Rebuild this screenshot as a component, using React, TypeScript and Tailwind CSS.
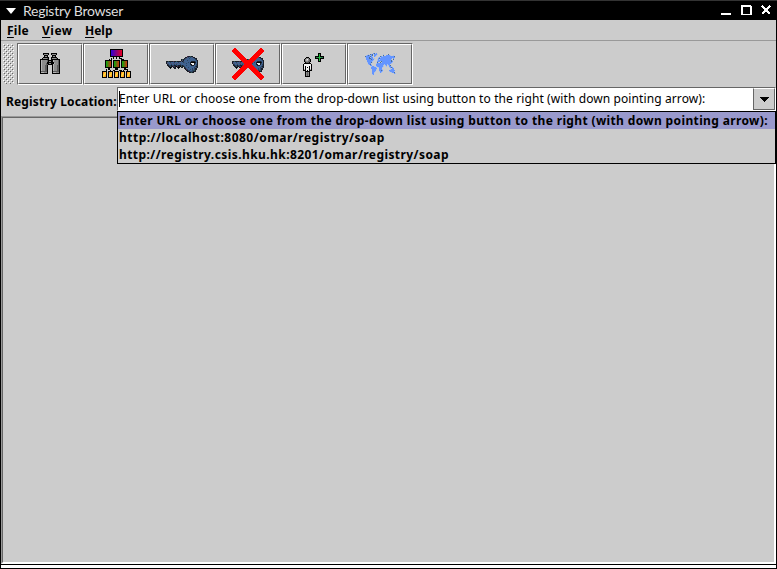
import React from 'react';

const palette: Record<string, string> = {
  k: '#000000', g: '#8c8c8c', d: '#5c5c5c', l: '#b4b4b4', w: '#f2f2f2',
  n: '#1a1e28', b: '#3f6290', s: '#2a4462', m: '#4c5576', t: '#2f5552', p: '#4c2c4c',
  o: '#6495ff', q: '#4c7196', r: '#a9bfe8', v: '#22b83c', c: '#2b7a4c',
};

function Pixels({ rows, x, y }: { rows: string[]; x: number; y: number }) {
  return (
    <g>
      {rows.flatMap((row, j) =>
        row.split('').map((ch, i) =>
          palette[ch] ? <rect key={`${i}-${j}`} x={x + i} y={y + j} width={1} height={1} fill={palette[ch]} /> : null,
        ),
      )}
    </g>
  );
}

const binoculars = [
  '   kkkkkk  kkkkkk   ',
  '   kggggk  kggggk   ',
  '    kkkk    kkkk    ',
  '    kggk    kggk    ',
  '   kkkkkk  kkkkkk   ',
  '  kggggdk  kggggdk  ',
  'kkkkkkkkk  kkkkkkkkk',
  'klgggggdkkkkklggggdk',
  'klgggggdkggkklggggdk',
  'klgggggkkkkkkkggggdk',
  'klggggdkkggkkklgggdk',
  'klggggddkkkkklggggdk',
  'klgggddk    klgggddk',
  'klgggddk    klgggddk',
  'klgggddk    klgggddk',
  'klgggddk    klgggddk',
  'klgggddk    klgggddk',
  'klgggddk    klgggddk',
  'kddddddk    kddddddk',
  'klllgggk    klllgggk',
  'kkkkkkkk    kkkkkkkk',
];

const keyShape = [
  '                     pnntnn     ',
  '                   nnmsbsbmnn   ',
  '                  nsmbbsbbbbsnn ',
  '               ntnsmbbbbbbbbbsn ',
  '               nmnbbbsbbbbbbbbsn',
  'nntnnnnpnntnnnnmnsbbbbbbbnnnnsbn',
  'nmbbsbbbsbbbsbbbbsmbbbsbnkkkknbn',
  'nmmbmmbmmbmmbmmbbbbbsbbbnwwwnsbn',
  ' nsbbsbbsbsbbbsbbbbbbbbbnnwwnbsn',
  ' nnssnssnnssnnnsnsbbsbbbbnnnbbsn',
  '  nntnnpsnkpnnktnnsbbbbbbbbbbsnn',
  '   nkn nnn nkk nn nsbbsbbbbbsmsn',
  '    n   nn  n     nnmbbbbbsbsnn ',
  '                   npsbbsbsmsnn ',
  '                    nnssbbsstn  ',
  '                     nnpsssnnn  ',
  '                       nntnn    ',
];

const person = [
  '   kkk   ',
  '  kgggk  ',
  ' kglwgdk ',
  ' kgllgdk ',
  ' kdggddk ',
  '  kdddk  ',
  ' kkkkkkk ',
  'kwwwwwwwk',
  'kwwwwwwwk',
  'kwkwwwkwk',
  'kwkwkwkwk',
  'kwkwwwkwk',
  'klkwwwklk',
  'kkkwkwkkk',
  '  kkkkk  ',
  '  kgdgk  ',
  '  kgdgk  ',
  '  kgdgk  ',
  '  kgdgk  ',
  '  kkkkk  ',
];

const plus = [
  '   kkk   ',
  '   kvk   ',
  '   kvk   ',
  'kkkkvkkkk',
  'kccvvvcck',
  'kkkkvkkkk',
  '   kvk   ',
  '   kvk   ',
  '   kkk   ',
];

const world = [
  '        oqro                   ',
  '   r qoq ooor     r    q       ',
  ' roqoroq oor      q  oooor  r  ',
  'qooooqor or    qoroooooooooooq ',
  'roooqroo     roroooooooooooooo ',
  ' oooqqoorr   oqoooooooooooo o  ',
  ' oooooqoo   rorooooooooooor q  ',
  '  oooooor   roooooooooooooqr   ',
  '  ooooor    ooorqoooooooooqo   ',
  '  roooqr    qr qroooooooooor   ',
  '   ooo     roooooooooooooor    ',
  '   roqr    oooooooorooroo      ',
  '     oo    ooooooor ro roq     ',
  '      roor roooooor  r  oor    ',
  '      ooooor rooor      roqo   ',
  '      oooooo  ooo        r oo  ',
  '       oooor  ooor       rooo  ',
  '       oooo   ooqo      oooooo ',
  '       ooor   roor      roooor ',
  '       oor     or         rooq ',
  '       oo                    or',
  '       ro                      ',
];

function Icon({ children }: { children: React.ReactNode }) {
  return <svg width="32" height="32" viewBox="0 0 32 32" shapeRendering="crispEdges">{children}</svg>;
}

function Hierarchy() {
  return (
    <Icon>
      <defs>
        <linearGradient id="fill-top"><stop stopColor="#2000e0" /><stop offset="1" stopColor="#f00018" /></linearGradient>
        <linearGradient id="fill-branch"><stop offset=".1" stopColor="#08a810" /><stop offset="1" stopColor="#e02810" /></linearGradient>
        <linearGradient id="fill-leaf" x2="1" y2="1"><stop stopColor="#ff4000" /><stop offset=".5" stopColor="#ffe040" /><stop offset="1" stopColor="#ff5000" /></linearGradient>
      </defs>
      <path d="M16.5 9v3M13.5 9v1h-2v1h-2v1M19.5 9v1h2v1h2v1M8.5 20v1h-2v1h-1v1M9.5 20v2h1v1M16.5 20v3M15.5 20v2h-3v1M17.5 20v2h4v1M24.5 20v1h-1v2M25.5 20v1h2v2" fill="none" stroke="#000" strokeDasharray="2 1" />
      <rect x="10.5" y="1.5" width="12" height="7" fill="url(#fill-top)" stroke="#000" />
      {[5.5, 13.5, 21.5].map(x => <rect key={x} x={x} y="12.5" width="6" height="7" fill="url(#fill-branch)" stroke="#000" />)}
      {[2.5, 8.5, 14.5, 20.5, 26.5].map(x => <rect key={x} x={x} y="23.5" width="4" height="6" fill="url(#fill-leaf)" stroke="#000" />)}
    </Icon>
  );
}

function ToolButton({ children }: { children: React.ReactNode }) {
  return (
    <div className="h-[42px] w-[66px] border border-t-[#666] border-l-[#666] border-r-white border-b-white">
      <div className="flex h-full w-full items-center justify-center border border-t-white border-l-white border-r-[#666] border-b-[#666]">
        {children}
      </div>
    </div>
  );
}

function MenuItem({ first, rest, track }: { first: string; rest: string; track: string }) {
  return (
    <span className={track}>
      <span className="underline decoration-1 underline-offset-[2px]">{first}</span>
      {rest}
    </span>
  );
}

const dots = Array.from({ length: 20 }, (_, j) => j);

export default function App() {
  return (
    <div className="flex h-[569px] w-[777px] flex-col overflow-hidden bg-black font-['Noto_Sans','DejaVu_Sans',sans-serif] text-[12px] text-black">
      <div className="flex h-5 shrink-0 items-center border-t border-[#333] pr-[5px] pl-[6px]">
        <svg width="10" height="6" viewBox="0 0 10 6"><path d="M0 0h10L5 6z" fill="#fff" /></svg>
        <span className="ml-[7px] flex-1 font-['Lato',sans-serif] text-[14px] leading-[18px] tracking-[-0.25px] whitespace-nowrap text-[#ddd]">Registry Browser</span>
        <svg width="51" height="11" viewBox="0 0 51 11" shapeRendering="crispEdges" fill="none" stroke="#fff" strokeWidth="2">
          <path d="M0 9h10M20 1h10M20.5 1v9M29.5 1v9" />
          <path d="M20 9.5h10" strokeWidth="1" />
          <path d="M41 1l8 8M49 1l-8 8" strokeWidth="2.5" />
        </svg>
      </div>
      <div className="mx-px flex min-h-0 flex-1 flex-col bg-[#ccc]">
        <div className="flex h-[21px] shrink-0 items-center gap-[13px] border-b border-[#999] pl-[6px] leading-[15px] font-bold">
          <MenuItem first="F" rest="ile" track="w-[22px] tracking-[0.25px]" />
          <MenuItem first="V" rest="iew" track="w-[30px] tracking-[0.5px]" />
          <MenuItem first="H" rest="elp" track="w-[30px]" />
        </div>
        <div className="flex h-[46px] shrink-0 pt-[2px] pl-[2px]">
          <svg width="11" height="42" className="mr-[3px]" shapeRendering="crispEdges">
            {dots.flatMap(j => [0, 1, 2].map(i => {
              const x = i * 4 + (j % 2 ? 2 : 0);
              return <g key={`${i}-${j}`}><rect x={x} y={j * 2 + 1} width="1" height="1" fill="#fff" /><rect x={x + 1} y={j * 2 + 2} width="1" height="1" fill="#666" /></g>;
            }))}
          </svg>
          <ToolButton><Icon><Pixels rows={binoculars} x={6} y={5} /></Icon></ToolButton>
          <ToolButton><Hierarchy /></ToolButton>
          <ToolButton><Icon><Pixels rows={keyShape} x={0} y={8} /></Icon></ToolButton>
          <ToolButton><Icon><Pixels rows={keyShape} x={0} y={8} /><path d="M1 1l30 30M31 1L1 31" stroke="#f00" strokeWidth="4.4" /></Icon></ToolButton>
          <ToolButton><Icon><Pixels rows={person} x={5} y={9} /><Pixels rows={plus} x={17} y={5} /></Icon></ToolButton>
          <ToolButton><Icon><Pixels rows={world} x={1} y={5} /></Icon></ToolButton>
        </div>
        <div className="relative flex h-[29px] shrink-0 items-start">
          <label className="w-[116px] shrink-0 pt-[6px] pl-[5px] leading-[17px] font-bold tracking-[0.16px] whitespace-nowrap">Registry Location:</label>
          <div className="flex h-6 flex-1 border border-t-[#666] border-l-[#666] border-r-white border-b-white bg-white">
            <div className="flex-1 pt-px pl-px leading-[19px] whitespace-nowrap"><span className="-mr-px mt-[2px] inline-block h-[16px] w-px bg-black align-top" /><span className="tracking-[0.1px]">Enter URL or choose one from the drop-down list using button to the right (with down pointing arrow):</span></div>
            <div className="flex h-[22px] w-[22px] items-center justify-center border border-[#666] border-t-white bg-[#ccc]">
              <svg width="10" height="5" viewBox="0 0 10 5" shapeRendering="crispEdges"><path d="M0 0h10L5 5z" fill="#000" /></svg>
            </div>
          </div>
          <div className="absolute top-[24px] left-[116px] z-10 h-[53px] w-[659px] border border-black bg-[#ccc] pt-0 leading-[17px] font-bold whitespace-nowrap">
            <div className="h-[17px] bg-[#99c] pl-px"><span className="tracking-[0.365px]">Enter URL or choose one from the drop-down list using button to the right (with down pointing arrow):</span></div>
            <div className="h-[17px] pl-px"><span className="tracking-[0.485px]">http://localhost:8080/omar/registry/soap</span></div>
            <div className="h-[17px] pl-px"><span className="tracking-[0.42px]">http://registry.csis.hku.hk:8201/omar/registry/soap</span></div>
          </div>
        </div>
        <div className="flex-1 border border-t-[#999] border-l-[#999] border-r-white border-b-white">
          <div className="h-full border border-t-[#666] border-l-[#666] border-r-white border-b-white" />
        </div>
        <div className="h-px shrink-0 bg-black" />
        <div className="h-[3px] shrink-0 bg-white" />
        <div className="h-px shrink-0 bg-black" />
      </div>
    </div>
  );
}
